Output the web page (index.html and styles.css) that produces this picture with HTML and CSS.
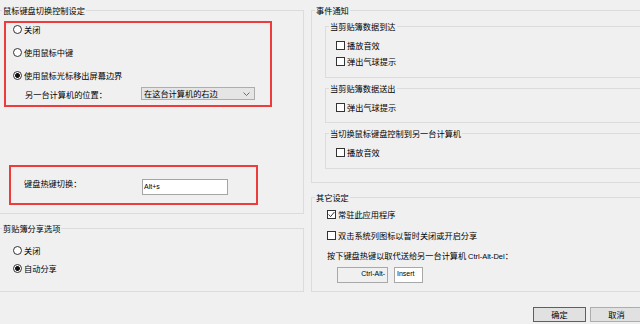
FILE: index.html
```html
<!DOCTYPE html>
<html lang="zh-CN">
<head>
<meta charset="utf-8">
<title>设定</title>
<link rel="stylesheet" href="styles.css">
</head>
<body>
<div class="dialog">
  <div class="main">
    <div class="col col-left">
      <fieldset class="group g-switch">
        <legend>鼠标键盘切换控制设定</legend>
        <div class="mark mark-mode">
          <label class="opt r1"><span class="radio"></span>关闭</label>
          <label class="opt r2"><span class="radio"></span>使用鼠标中键</label>
          <label class="opt r3"><span class="radio on"></span>使用鼠标光标移出屏幕边界</label>
          <div class="pos-row">
            <span class="pos-label">另一台计算机的位置：</span>
            <span class="combo">在这台计算机的右边<svg class="chev" width="7" height="4" viewBox="0 0 7 4"><polyline points="0.5,0.5 3.5,3.5 6.5,0.5" fill="none" stroke="#606060" stroke-width="0.9"/></svg></span>
          </div>
        </div>
        <div class="mark mark-hotkey">
          <span class="hk-label">键盘热键切换：</span>
          <span class="field">Alt+s</span>
        </div>
      </fieldset>
      <fieldset class="group g-clip">
        <legend>剪贴簿分享选项</legend>
        <label class="opt c1"><span class="radio"></span>关闭</label>
        <label class="opt c2"><span class="radio on"></span>自动分享</label>
      </fieldset>
    </div>
    <div class="col col-right">
      <fieldset class="group g-events">
        <legend>事件通知</legend>
        <fieldset class="group sub sub1">
          <legend>当剪贴簿数据到达</legend>
          <label class="opt first"><span class="check"></span>播放音效</label>
          <label class="opt next"><span class="check"></span>弹出气球提示</label>
        </fieldset>
        <fieldset class="group sub sub2">
          <legend>当剪贴簿数据送出</legend>
          <label class="opt first"><span class="check"></span>弹出气球提示</label>
        </fieldset>
        <fieldset class="group sub sub3">
          <legend>当切换鼠标键盘控制到另一台计算机</legend>
          <label class="opt first"><span class="check"></span>播放音效</label>
        </fieldset>
      </fieldset>
      <fieldset class="group g-other">
        <legend>其它设定</legend>
        <label class="opt o1"><span class="check"><svg width="7" height="7" viewBox="0 0 7 7"><polyline points="0.6,3.4 2.6,5.6 6.4,1" fill="none" stroke="#222" stroke-width="0.9"/></svg></span>常驻此应用程序</label>
        <label class="opt o2"><span class="check"></span>双击系统列图标以暂时关闭或开启分享</label>
        <div class="o3">按下键盘热键以取代送给另一台计算机 <span class="latin">Ctrl-Alt-Del</span>：</div>
        <div class="keys">
          <span class="key key-mod">Ctrl-Alt-</span>
          <span class="key key-main">Insert</span>
        </div>
      </fieldset>
    </div>
  </div>
  <div class="buttons">
    <button class="btn btn-default">确定</button>
    <button class="btn">取消</button>
  </div>
</div>
</body>
</html>
```
FILE: styles.css
```css
html, body {
  margin: 0;
  padding: 0;
  overflow: hidden;
  background: #f0f0f0;
}
body {
  width: 640px;
  height: 324px;
  font-family: "Noto Sans CJK SC", "Noto Sans", sans-serif;
  font-size: 8.2px;
  color: #000;
}
.dialog {
  display: flex;
  flex-direction: column;
}
.main {
  display: flex;
  gap: 7px;
  padding-top: 5px;
}
.col {
  display: flex;
  flex-direction: column;
  flex: none;
}
.col-left {
  width: 306px;
  margin-left: -2px;
}
.col-right {
  width: 345px;
}

/* group boxes */
.group {
  margin: 0;
  padding: 0;
  border: 1px solid #dcdcdc;
  min-width: 0;
  box-sizing: border-box;
}
.group > legend {
  padding: 0 1px;
  margin-left: 3px;
  line-height: 11px;
  height: 11px;
}
.g-switch { height: 209px; }
.g-clip { height: 69px; margin-top: 9px; }
.g-events { height: 178px; }
.g-other { height: 100px; margin-top: 9px; }

/* red highlight boxes */
.mark {
  border: 2px solid #ee3b3b;
  box-sizing: border-box;
}
.mark-mode {
  margin: 5px 0 0 5px;
  width: 268px;
  height: 86px;
  padding-left: 7px;
  display: flex;
  flex-direction: column;
}
.mark-hotkey {
  margin: 58px 0 0 10px;
  width: 249px;
  height: 40px;
  padding: 12px 0 0 13px;
  display: flex;
  align-items: flex-start;
}

/* options */
.opt {
  display: flex;
  align-items: center;
  gap: 2px;
  height: 12px;
  line-height: 12px;
  white-space: nowrap;
}
.radio {
  width: 9px;
  height: 9px;
  box-sizing: border-box;
  border: 1px solid #333;
  border-radius: 50%;
  background: #fff;
  flex: none;
}
.radio.on {
  background: radial-gradient(circle, #111 0, #111 2.1px, #fff 2.7px);
}
.check {
  width: 9px;
  height: 9px;
  box-sizing: border-box;
  border: 1px solid #333;
  background: #fff;
  flex: none;
  display: flex;
  align-items: center;
  justify-content: center;
}
.r2, .r3 { margin-top: 11px; }

.pos-row {
  display: flex;
  align-items: center;
  margin: 6px 0 0 12px;
  height: 13px;
}
.pos-label {
  width: 116px;
  line-height: 12px;
  flex: none;
}
.combo {
  width: 114px;
  height: 13px;
  box-sizing: border-box;
  border: 1px solid #adadad;
  background: #e5e5e5;
  display: flex;
  align-items: center;
  justify-content: space-between;
  padding: 0 4px 0 2px;
  line-height: 11px;
}

.hk-label {
  width: 118px;
  line-height: 8px;
  flex: none;
}
.field {
  width: 86px;
  height: 16px;
  box-sizing: border-box;
  border: 1px solid #a5a5a5;
  background: #fff;
  font-family: "Liberation Sans", Arial, sans-serif;
  font-size: 7px;
  line-height: 9px;
  padding: 2px 0 0 1px;
}

.c1 { margin: 10px 0 0 14px; }
.c2 { margin: 6px 0 0 14px; }

/* event sub-groups */
.sub { margin: 5px 0 0 13px; }
.sub1 { height: 57px; }
.sub2 { height: 40px; }
.sub3 { height: 41px; }
.sub .opt { padding-left: 10px; }
.sub .first { margin-top: 7px; }
.sub .next { margin-top: 4px; }

/* other settings */
.g-other .opt, .o3 { padding-left: 15px; }
.o1 { margin-top: 5px; }
.o2 { margin-top: 9px; }
.o3 {
  margin-top: 8px;
  height: 12px;
  line-height: 12px;
  white-space: nowrap;
}
.latin {
  font-family: "Liberation Sans", Arial, sans-serif;
  font-size: 7.5px;
}
.keys {
  display: flex;
  gap: 6px;
  margin-top: 6px;
  padding-left: 25px;
}
.key {
  height: 16px;
  box-sizing: border-box;
  border: 1px solid #a8a8a8;
  font-family: "Liberation Sans", Arial, sans-serif;
  font-size: 7px;
  line-height: 9px;
  padding-top: 1px;
}
.key-mod {
  width: 51px;
  background: #f0f0f0;
  text-align: right;
  padding-right: 2px;
}
.key-main {
  width: 29px;
  background: #fff;
  padding-left: 2px;
}

/* buttons */
.buttons {
  display: flex;
  justify-content: flex-end;
  gap: 4px;
  margin-top: 15px;
  margin-right: -3px;
}
.btn {
  width: 53px;
  height: 15px;
  box-sizing: border-box;
  border: 1px solid #adadad;
  background: #e1e1e1;
  font-family: "Noto Sans CJK SC", sans-serif;
  font-size: 8.2px;
  line-height: 11px;
  padding: 0;
  color: #000;
}
.btn-default {
  border-color: #0078d7;
}
```
